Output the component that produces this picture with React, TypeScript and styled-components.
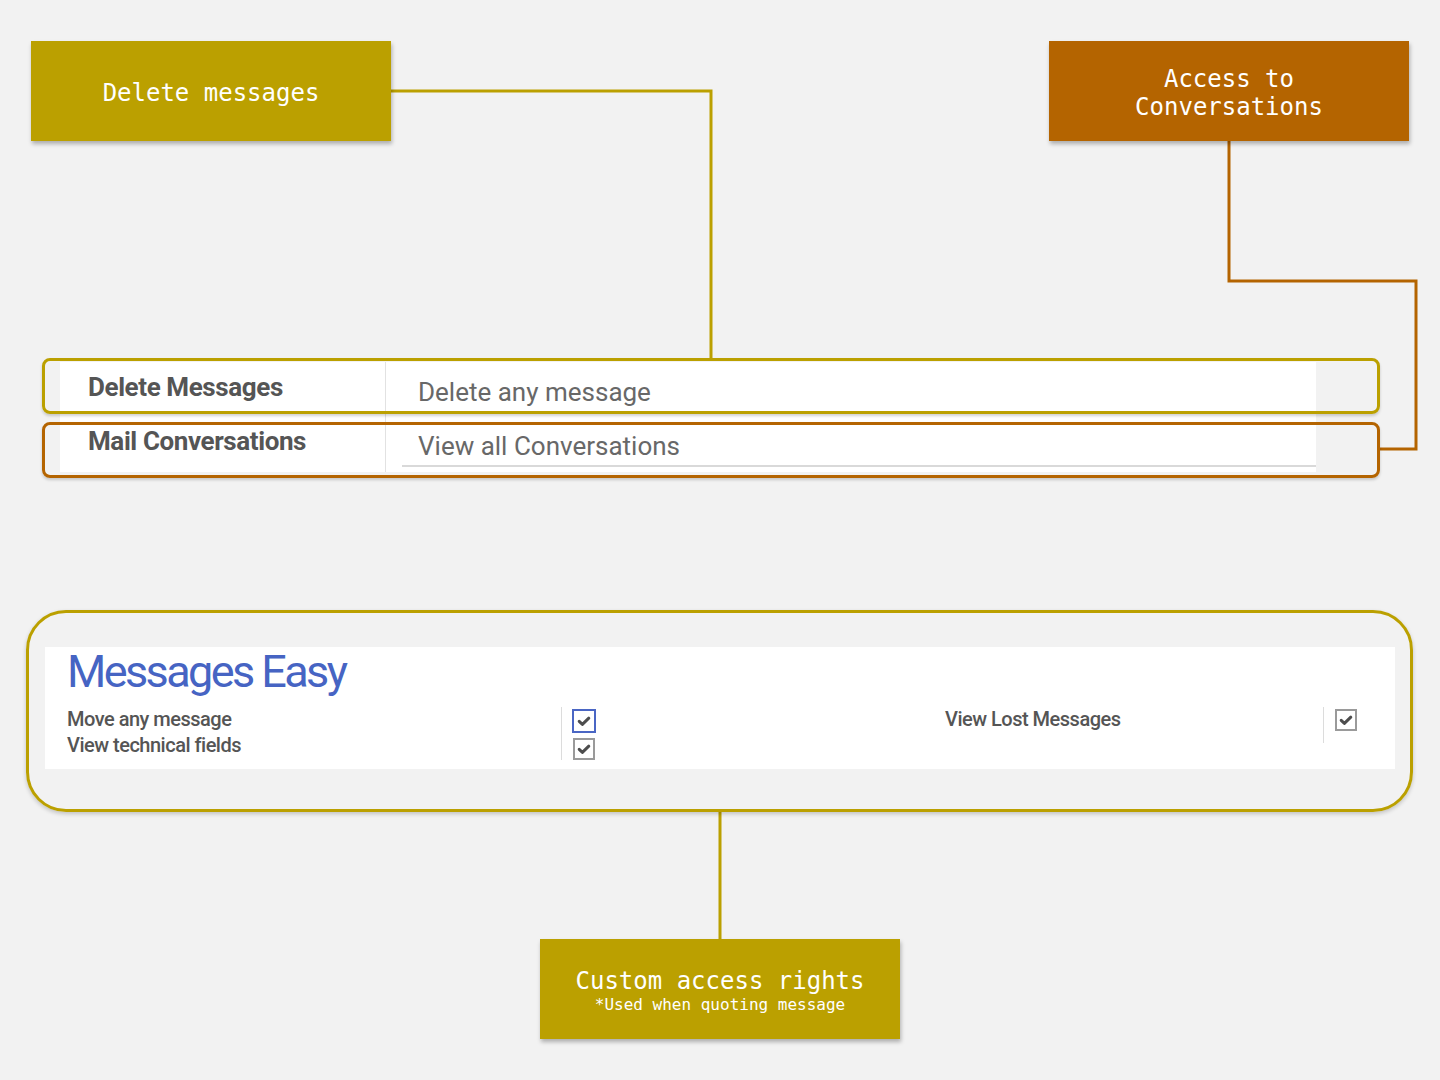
import { FC } from 'react';
import styled, { createGlobalStyle } from 'styled-components';

const GOLD = '#bba000';
const RUST = '#b46400';

const GlobalStyle = createGlobalStyle`
  html, body {
    margin: 0;
    padding: 0;
    background: #f2f2f2;
  }
  * {
    box-sizing: border-box;
  }
`;

const Page = styled.div`
  position: relative;
  width: 1440px;
  height: 1080px;
  padding-top: 41px;
  background: #f2f2f2;
  font-family: Roboto, 'Liberation Sans', sans-serif;
  overflow: hidden;
`;

const Connectors = styled.svg`
  position: absolute;
  left: 0;
  top: 0;
  pointer-events: none;
`;

const Content = styled.div`
  position: relative;
  display: flex;
  flex-direction: column;
`;

const TopRow = styled.div`
  display: flex;
  justify-content: space-between;
  padding: 0 31px;
`;

const BottomRow = styled.div`
  display: flex;
  justify-content: center;
  margin-top: 127px;
`;

const Callout = styled.div<{ $bg: string }>`
  width: 360px;
  height: 100px;
  padding-top: 4px;
  display: flex;
  flex-direction: column;
  align-items: center;
  justify-content: center;
  background: ${(p) => p.$bg};
  color: #fff;
  font-family: 'DejaVu Sans Mono', 'Liberation Mono', monospace;
  font-size: 24px;
  line-height: 28px;
  text-align: center;
  box-shadow: 1px 3px 4px rgba(0, 0, 0, 0.28);
`;

const CalloutSub = styled.div`
  font-size: 16px;
  line-height: 20px;
`;

/* --- top form excerpt --- */

const FormSection = styled.div`
  position: relative;
  margin: 217px 0 0 42px;
  width: 1338px;
  height: 120px;
`;

const FormSheet = styled.div`
  margin: 4px 64px 6px 18px;
  height: 110px;
  background: #fff;
  display: grid;
  grid-template-columns: 326px 1fr;
  grid-template-rows: 54px 56px;
`;

const FieldLabel = styled.div`
  padding: 10px 0 0 28px;
  border-right: 1px solid #e2e2e2;
  font-size: 26px;
  line-height: 30px;
  font-weight: 700;
  letter-spacing: -0.4px;
  color: #555;
`;

const FieldCell = styled.div`
  padding-left: 16px;
`;

const FieldInput = styled.div`
  height: 51px;
  padding: 15px 0 0 16px;
  border-bottom: 2px solid #d9d9d9;
  font-size: 26px;
  line-height: 30px;
  color: #686868;
`;

const Highlight = styled.div<{ $color: string; $top: number }>`
  position: absolute;
  left: 0;
  right: 0;
  top: ${(p) => p.$top}px;
  height: 56px;
  border: 3px solid ${(p) => p.$color};
  border-radius: 8px;
  box-shadow: 0 2px 3px rgba(0, 0, 0, 0.18);
`;

/* --- bottom group --- */

const GroupFrame = styled.div`
  margin: 132px 0 0 26px;
  width: 1387px;
  height: 202px;
  padding: 34px 15px 0 16px;
  border: 3px solid ${GOLD};
  border-radius: 40px;
  box-shadow: 0 2px 4px rgba(0, 0, 0, 0.2);
`;

const GroupPanel = styled.div`
  height: 122px;
  padding: 2px 0 0 22px;
  background: #fff;
`;

const GroupTitle = styled.div`
  font-size: 45px;
  line-height: 46px;
  letter-spacing: -2.6px;
  color: #4664c3;
`;

const PermGrid = styled.div`
  display: grid;
  grid-template-columns: 494px 384px 378px 1fr;
  margin-top: 11px;
`;

const PermLabels = styled.div`
  font-size: 20px;
  line-height: 26px;
  font-weight: 500;
  letter-spacing: -0.5px;
  color: #555;
`;

const PermChecks = styled.div<{ $height: number }>`
  display: flex;
  flex-direction: column;
  gap: 5px;
  height: ${(p) => p.$height}px;
  margin-top: 1px;
  padding: 2px 0 0 11px;
  border-left: 1px solid #dcdcdc;
`;

const Box = styled.div<{ $focus?: boolean }>`
  width: ${(p) => (p.$focus ? 24 : 22)}px;
  height: ${(p) => (p.$focus ? 24 : 22)}px;
  margin-left: ${(p) => (p.$focus ? -1 : 0)}px;
  display: flex;
  align-items: center;
  justify-content: center;
  background: #fff;
  border: 2px solid ${(p) => (p.$focus ? '#4a66c4' : '#9a9a9a')};
`;

const Checkbox: FC<{ focus?: boolean }> = ({ focus }) => (
  <Box $focus={focus}>
    <svg width="16" height="16" viewBox="0 0 16 16">
      <path
        d="M3.2 8.4 L6.4 11.4 L12.8 5.2"
        fill="none"
        stroke="#4d4d4d"
        strokeWidth="3"
        strokeLinecap="round"
        strokeLinejoin="round"
      />
    </svg>
  </Box>
);

const App: FC = () => {
  return (
    <Page>
      <GlobalStyle />
      <Connectors width="1440" height="1080" viewBox="0 0 1440 1080">
        <g fill="none" strokeWidth="3">
          <path d="M390 91 H711 V358" stroke={GOLD} />
          <path d="M1229 141 V281 H1416 V449 H1380" stroke={RUST} />
          <path d="M720 812 V939" stroke={GOLD} />
        </g>
      </Connectors>

      <Content>
        <TopRow>
          <Callout $bg={GOLD}>Delete messages</Callout>
          <Callout $bg={RUST}>
            <div>Access to</div>
            <div>Conversations</div>
          </Callout>
        </TopRow>

        <FormSection>
          <FormSheet>
            <FieldLabel>Delete Messages</FieldLabel>
            <FieldCell>
              <FieldInput>Delete any message</FieldInput>
            </FieldCell>
            <FieldLabel>Mail Conversations</FieldLabel>
            <FieldCell>
              <FieldInput>View all Conversations</FieldInput>
            </FieldCell>
          </FormSheet>
          <Highlight $color={GOLD} $top={0} />
          <Highlight $color={RUST} $top={64} />
        </FormSection>

        <GroupFrame>
          <GroupPanel>
            <GroupTitle>Messages Easy</GroupTitle>
            <PermGrid>
              <PermLabels>
                <div>Move any message</div>
                <div>View technical fields</div>
              </PermLabels>
              <PermChecks $height={53}>
                <Checkbox focus />
                <Checkbox />
              </PermChecks>
              <PermLabels>View Lost Messages</PermLabels>
              <PermChecks $height={36}>
                <Checkbox />
              </PermChecks>
            </PermGrid>
          </GroupPanel>
        </GroupFrame>

        <BottomRow>
          <Callout $bg={GOLD}>
            <div>Custom access rights</div>
            <CalloutSub>*Used when quoting message</CalloutSub>
          </Callout>
        </BottomRow>
      </Content>
    </Page>
  );
};

export default App;
